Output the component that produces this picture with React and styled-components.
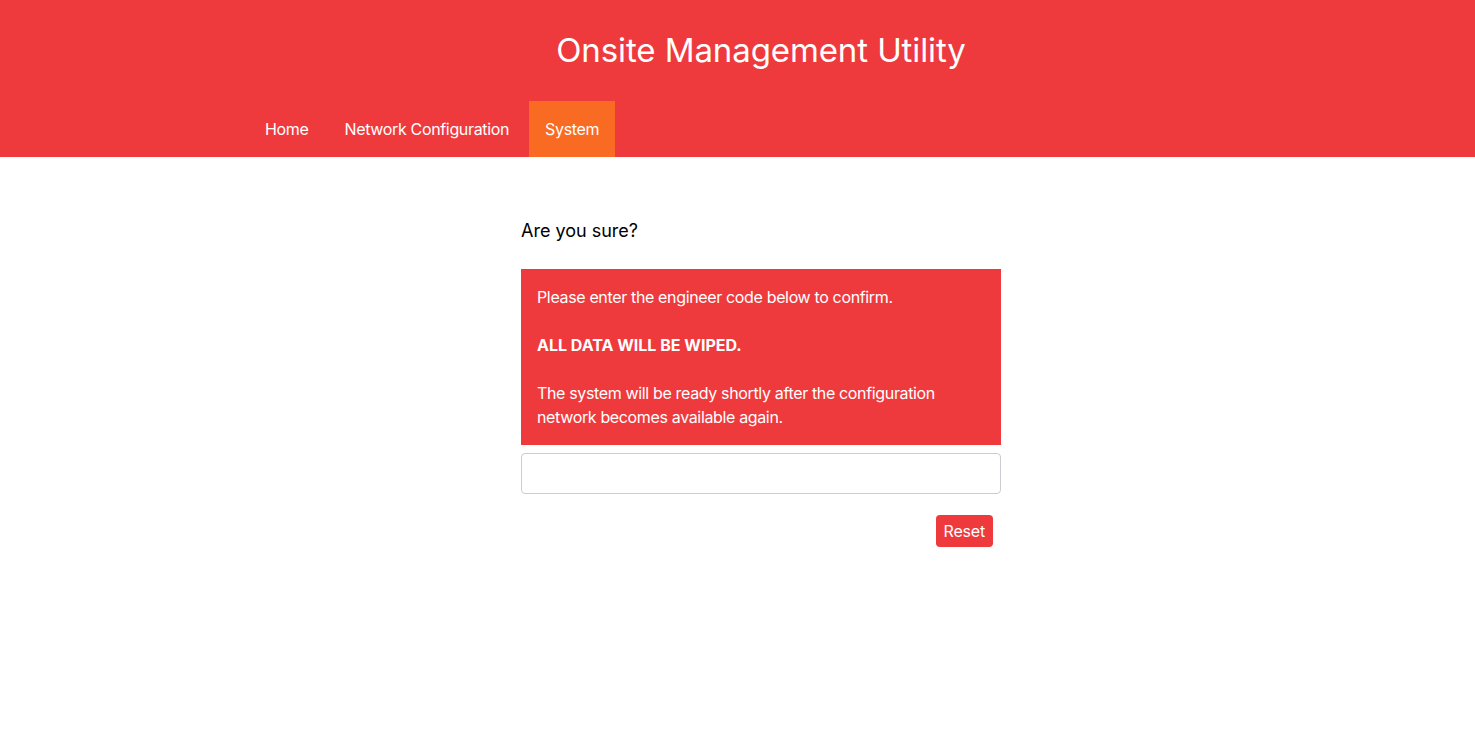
import React from "react";
import styled, { createGlobalStyle } from "styled-components";

const Global = createGlobalStyle`
  html, body { margin: 0; padding: 0; background: #fff; }
  body { font-family: Inter, "Noto Sans", "Liberation Sans", sans-serif; color: #000; }
  * { box-sizing: border-box; }
`;

const Page = styled.div`
  padding-left: 47px;
`;

const Header = styled.header`
  background: #ef3a3d;
  margin-left: -47px;
  padding-left: 47px;
`;

const Title = styled.h1`
  margin: 0;
  padding-top: 30px;
  height: 101px;
  text-align: center;
  color: #fff;
  font-size: 33px;
  font-weight: 400;
  line-height: 40px;
  letter-spacing: -0.1px;
`;

const Nav = styled.nav`
  max-width: 1024px;
  margin: 0 auto;
  display: flex;
  gap: 4px;
`;

const NavItem = styled.a`
  display: flex;
  align-items: center;
  height: 56px;
  padding: 0 16px;
  color: #fff;
  font-size: 16px;
  letter-spacing: -0.34px;
  text-decoration: none;
  background: ${(p) => (p.$active ? "#f96a22" : "transparent")};
`;

const Main = styled.main`
  width: 480px;
  margin: 0 auto;
  padding-top: 60px;
`;

const Question = styled.h2`
  margin: 0;
  font-size: 18px;
  font-weight: 400;
  line-height: 28px;
`;

const Alert = styled.div`
  margin-top: 24px;
  background: #ef3a3d;
  color: #fff;
  padding: 16px;
  font-size: 16px;
  line-height: 24px;
  letter-spacing: -0.35px;
`;

const Para = styled.p`
  margin: 0 0 24px;
  font-weight: ${(p) => (p.$bold ? 700 : 400)};
  letter-spacing: ${(p) => (p.$bold ? "0" : "-0.35px")};
  &:last-child { margin-bottom: 0; }
`;

const Input = styled.input`
  display: block;
  width: 100%;
  height: 41px;
  margin-top: 8px;
  border: 1px solid #cbcdd2;
  border-radius: 4px;
  padding: 0 12px;
  font: inherit;
  outline: none;
`;

const Actions = styled.div`
  display: flex;
  justify-content: flex-end;
  padding-right: 8px;
  margin-top: 21px;
`;

const Button = styled.button`
  height: 32px;
  padding: 0 8px;
  border: none;
  border-radius: 4px;
  background: #ef3a3d;
  color: #fff;
  font-family: inherit;
  font-size: 16px;
  letter-spacing: -0.2px;
  cursor: pointer;
`;

export default function App() {
  return (
    <>
      <Global />
      <Page>
        <Header>
          <Title>Onsite Management Utility</Title>
          <Nav>
            <NavItem href="#">Home</NavItem>
            <NavItem href="#">Network Configuration</NavItem>
            <NavItem href="#" $active>System</NavItem>
          </Nav>
        </Header>
        <Main>
          <Question>Are you sure?</Question>
          <Alert>
            <Para>Please enter the engineer code below to confirm.</Para>
            <Para $bold>ALL DATA WILL BE WIPED.</Para>
            <Para>
              The system will be ready shortly after the configuration network
              becomes available again.
            </Para>
          </Alert>
          <Input type="text" />
          <Actions>
            <Button>Reset</Button>
          </Actions>
        </Main>
      </Page>
    </>
  );
}
